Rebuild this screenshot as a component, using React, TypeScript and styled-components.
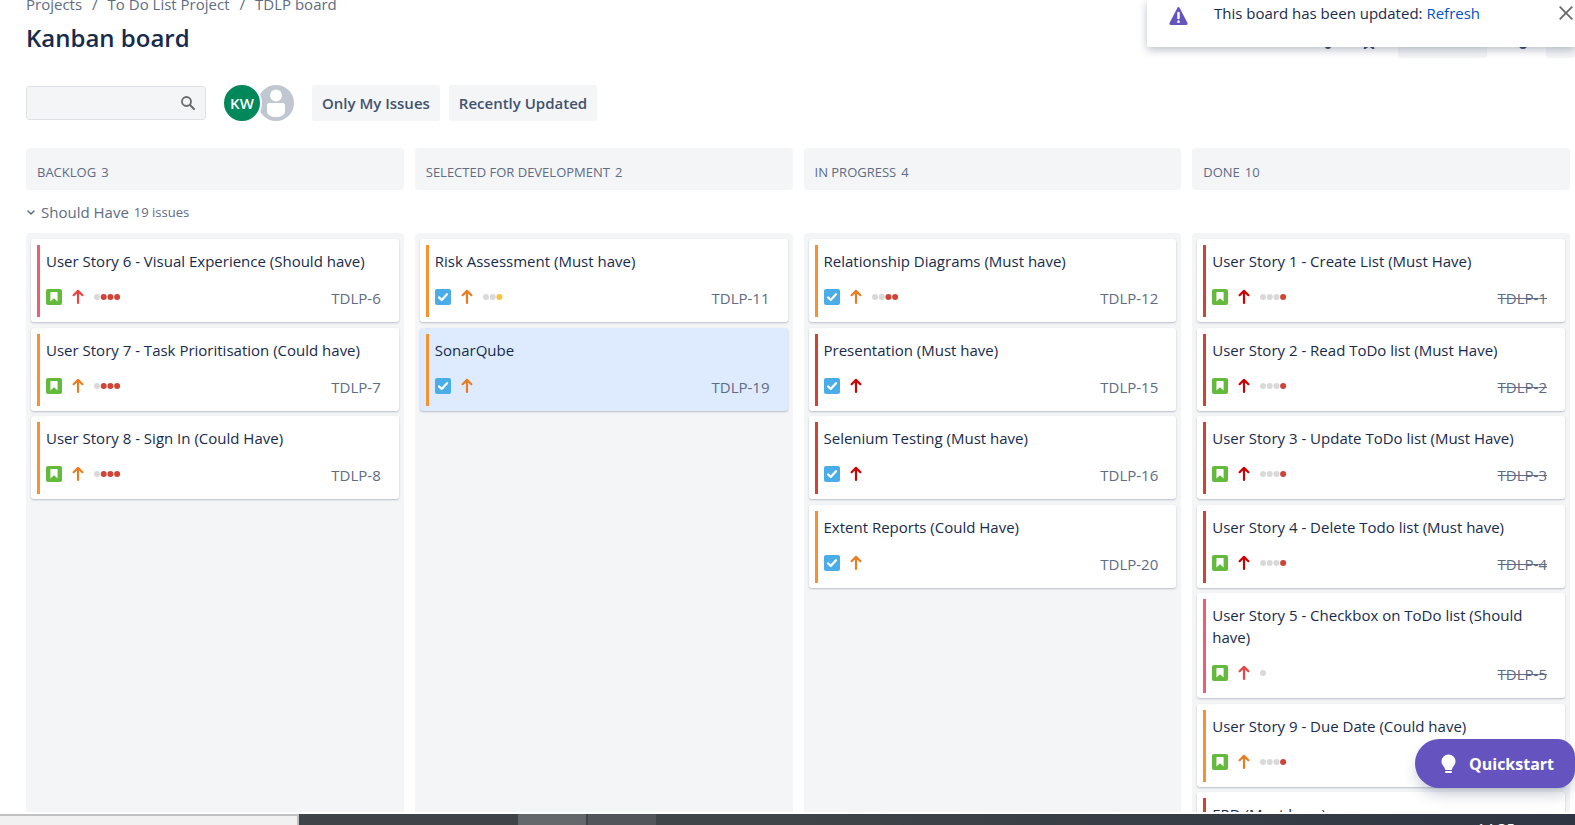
import React from 'react';
import styled, { createGlobalStyle } from 'styled-components';

const GlobalStyle = createGlobalStyle`
  *, *::before, *::after { box-sizing: border-box; }
  html, body, #root { height: 100%; margin: 0; }
  body {
    overflow: hidden;
    background: #fff;
    color: #172b4d;
    font-family: 'Open Sans', 'Noto Sans', sans-serif;
    font-size: 15px;
    line-height: 22px;
  }
  button, input { font: inherit; color: inherit; }
  button { border: 0; background: none; padding: 0; cursor: pointer; }
  a { color: inherit; text-decoration: none; }
  h1, h2, p, ul { margin: 0; padding: 0; font-weight: 400; }
  ul { list-style: none; }
  svg { display: block; flex: none; }
`;

const Screen = styled.div`
  display: flex;
  flex-direction: column;
  height: 100vh;
  overflow: hidden;
`;

const Page = styled.main`
  display: flex;
  flex-direction: column;
  flex: 1;
  min-height: 0;
  padding: 0 5px 2px 26px;
`;

const Breadcrumbs = styled.nav`
  display: flex;
  gap: 10px;
  height: 15px;
  align-items: flex-end;
  color: #5e6c84;
  white-space: nowrap;
`;

const TitleRow = styled.header`
  display: flex;
  justify-content: space-between;
  height: 43px;
`;

const PageTitle = styled.h1`
  font-size: 24px;
  font-weight: 600;
  line-height: 46px;
`;

const HeaderActions = styled.div`
  display: flex;
  align-items: flex-end;
  gap: 16px;
  margin-right: -5px;
`;

const HeaderIcon = styled.button<{ $align?: string }>`
  display: grid;
  justify-items: ${(p) => p.$align || 'center'};
  align-content: start;
  width: 27px;
  height: 23px;
  color: #42526e;
`;

const HeaderButton = styled.button<{ $width: number }>`
  width: ${(p) => p.$width}px;
  height: 36px;
  border-radius: 3px;
  background: #f4f5f7;
`;

const Toolbar = styled.div`
  display: flex;
  align-items: center;
  height: 36px;
  margin: 27px 0;
`;

const SearchBox = styled.label`
  display: flex;
  align-items: center;
  width: 180px;
  height: 34px;
  padding: 0 9px;
  border: 1px solid #dfe1e6;
  border-radius: 3px;
  background: #f4f5f7;
  color: #6b6b6b;
`;

const SearchInput = styled.input`
  flex: 1;
  min-width: 0;
  border: 0;
  outline: 0;
  background: transparent;
`;

const Avatars = styled.div`
  display: flex;
  margin: 0 16px;
`;

const Avatar = styled.button<{ $color: string }>`
  display: grid;
  place-items: center;
  width: 40px;
  height: 40px;
  border: 2px solid #fff;
  border-radius: 50%;
  background: ${(p) => p.$color};
  color: #fff;
  font-weight: 600;
  overflow: hidden;

  &:first-child { z-index: 1; }
  & + & { margin-left: -6px; }
`;

const FilterButton = styled.button`
  height: 36px;
  padding: 0 10px;
  border-radius: 3px;
  background: #f4f5f7;
  color: #42526e;
  font-weight: 600;
  white-space: nowrap;

  & + & { margin-left: 9px; }
`;

const Columns = styled.div`
  display: grid;
  grid-template-columns: repeat(4, minmax(0, 1fr));
  gap: 11px;
`;

const BoardColumns = styled(Columns)`
  flex: 1;
  min-height: 0;
  grid-template-rows: minmax(0, 1fr);
`;

const ColumnHeader = styled.h2`
  display: flex;
  gap: 5px;
  height: 42px;
  padding: 13px 11px 0;
  border-radius: 4px;
  background: #f4f5f7;
  color: #5e6c84;
  font-size: 13px;
`;

const Swimlane = styled.button`
  display: flex;
  align-items: center;
  gap: 5px;
  height: 43px;
  color: #5e6c84;
`;

const LaneCount = styled.span`
  font-size: 13px;
`;

const Column = styled.ul`
  min-height: 0;
  padding: 6px 5px;
  border-radius: 4px 4px 0 0;
  background: #f4f5f7;
  overflow: hidden;
`;

const CardBox = styled.li<{ $selected?: boolean }>`
  display: flex;
  padding: 6px 18px 5px 6px;
  border-radius: 3px;
  background: ${(p) => (p.$selected ? '#deebff' : '#fff')};
  box-shadow: 0 1px 2px rgba(9, 30, 66, 0.25);

  &:nth-child(odd) { margin-bottom: 6px; }
  &:nth-child(even) { margin-bottom: 5px; }
`;

const Grabber = styled.span<{ $color: string }>`
  flex: none;
  width: 3px;
  background: ${(p) => p.$color};
`;

const CardBody = styled.div`
  flex: 1;
  min-width: 0;
  padding: 5px 0 9px 6px;
`;

const CardFooter = styled.div`
  display: flex;
  align-items: center;
  height: 22px;
  margin-top: 14px;
`;

const CardIcons = styled.span`
  display: flex;
  align-items: center;
  gap: 8px;
`;

const IssueKey = styled.a<{ $done?: boolean }>`
  margin-left: auto;
  padding-top: 2px;
  color: #5e6c84;
  text-decoration: ${(p) => (p.$done ? 'line-through' : 'none')};
`;

const Notification = styled.aside`
  position: absolute;
  top: 0;
  right: 0;
  display: flex;
  width: 428px;
  height: 47px;
  padding: 2px 0 0 22px;
  border-radius: 0 0 0 3px;
  background: #fff;
  box-shadow: 0 3px 8px rgba(9, 30, 66, 0.28);
  white-space: nowrap;
`;

const NotificationText = styled.p`
  flex: 1;
  margin-left: 26px;
`;

const NotificationLink = styled.a`
  color: #0052cc;
`;

const CloseButton = styled.button`
  display: grid;
  place-items: center;
  width: 18px;
  height: 22px;
  color: #666;
`;

const Quickstart = styled.button`
  position: absolute;
  right: 0;
  bottom: 37px;
  display: flex;
  align-items: center;
  gap: 13px;
  width: 160px;
  height: 49px;
  padding-left: 26px;
  border-radius: 25px 18px 18px 25px;
  background: #6554c0;
  color: #fff;
  font-size: 16px;
  font-weight: 700;
  box-shadow: 0 8px 16px -4px rgba(9, 30, 66, 0.3);
`;

const Taskbar = styled.footer`
  display: flex;
  flex: none;
  height: 11px;
  background: linear-gradient(90deg, #404447 0%, #3f4448 50%, #2f3542 100%);
  overflow: hidden;
`;

const TaskbarSearch = styled.div`
  width: 299px;
  border: solid #c0c0c0;
  border-width: 2px 2px 0 0;
  background: #f1f1f1;
  margin-right: 219px;
`;

const TaskbarItem = styled.div<{ $color: string }>`
  width: 68px;
  margin-right: 2px;
  background: ${(p) => p.$color};
`;

const Clock = styled.time`
  margin: 3px 60px 0 auto;
  color: #fff;
`;

type IssueType = 'story' | 'task';
type Priority = 'highest' | 'high' | 'medium';

interface Issue {
  id: number;
  title: string;
  type: IssueType;
  priority: Priority;
  bar: string;
  dots?: string;
  selected?: boolean;
}

const PINK = '#f15c75';
const ORANGE = '#f79232';
const RED = '#d04437';

const arrowColors: Record<Priority, string> = {
  highest: '#ce0000',
  high: '#ea4444',
  medium: '#ea7d24',
};

const dotColors: Record<string, string> = { g: '#d9d9d9', r: '#d04437', y: '#f6c342' };

const columns: { name: string; count: number; done?: boolean; issues: Issue[] }[] = [
  {
    name: 'BACKLOG',
    count: 3,
    issues: [
      { id: 6, title: 'User Story 6 - Visual Experience (Should have)', type: 'story', priority: 'high', bar: PINK, dots: 'grrr' },
      { id: 7, title: 'User Story 7 - Task Prioritisation (Could have)', type: 'story', priority: 'medium', bar: ORANGE, dots: 'grrr' },
      { id: 8, title: 'User Story 8 - Sign In (Could Have)', type: 'story', priority: 'medium', bar: ORANGE, dots: 'grrr' },
    ],
  },
  {
    name: 'SELECTED FOR DEVELOPMENT',
    count: 2,
    issues: [
      { id: 11, title: 'Risk Assessment (Must have)', type: 'task', priority: 'medium', bar: ORANGE, dots: 'ggy' },
      { id: 19, title: 'SonarQube', type: 'task', priority: 'medium', bar: ORANGE, selected: true },
    ],
  },
  {
    name: 'IN PROGRESS',
    count: 4,
    issues: [
      { id: 12, title: 'Relationship Diagrams (Must have)', type: 'task', priority: 'medium', bar: ORANGE, dots: 'ggrr' },
      { id: 15, title: 'Presentation (Must have)', type: 'task', priority: 'highest', bar: RED },
      { id: 16, title: 'Selenium Testing (Must have)', type: 'task', priority: 'highest', bar: RED },
      { id: 20, title: 'Extent Reports (Could Have)', type: 'task', priority: 'medium', bar: ORANGE },
    ],
  },
  {
    name: 'DONE',
    count: 10,
    done: true,
    issues: [
      { id: 1, title: 'User Story 1 - Create List (Must Have)', type: 'story', priority: 'highest', bar: RED, dots: 'gggr' },
      { id: 2, title: 'User Story 2 - Read ToDo list (Must Have)', type: 'story', priority: 'highest', bar: RED, dots: 'gggr' },
      { id: 3, title: 'User Story 3 - Update ToDo list (Must Have)', type: 'story', priority: 'highest', bar: RED, dots: 'gggr' },
      { id: 4, title: 'User Story 4 - Delete Todo list (Must have)', type: 'story', priority: 'highest', bar: RED, dots: 'gggr' },
      { id: 5, title: 'User Story 5 - Checkbox on ToDo list (Should have)', type: 'story', priority: 'high', bar: PINK, dots: 'g' },
      { id: 9, title: 'User Story 9 - Due Date (Could have)', type: 'story', priority: 'medium', bar: ORANGE, dots: 'gggr' },
      { id: 10, title: 'ERD (Must have)', type: 'task', priority: 'highest', bar: RED },
    ],
  },
];

const TypeIcon = ({ type }: { type: IssueType }) => (
  <svg width="16" height="16" viewBox="0 0 16 16" aria-hidden="true">
    <rect width="16" height="16" rx="2" fill={type === 'story' ? '#63ba3c' : '#4bade8'} />
    {type === 'story' ? (
      <path d="M5 3h6a.6.6 0 0 1 .6.6V12.6L8 9.2l-3.6 3.4V3.6A.6.6 0 0 1 5 3z" fill="#fff" />
    ) : (
      <path d="M4 8.4l2.7 2.6L12 5.2" fill="none" stroke="#fff" strokeWidth="2.2" strokeLinecap="round" strokeLinejoin="round" />
    )}
  </svg>
);

const PriorityIcon = ({ priority }: { priority: Priority }) => (
  <svg width="16" height="16" viewBox="0 0 16 16" aria-hidden="true">
    <path
      d="M8 14V2.6M3.6 6.2L8 1.9l4.4 4.3"
      fill="none"
      stroke={arrowColors[priority]}
      strokeWidth="2.2"
      strokeLinecap="round"
      strokeLinejoin="round"
    />
  </svg>
);

const DaysInColumn = ({ dots }: { dots: string }) => (
  <svg width="28" height="6" viewBox="0 0 28 6" aria-hidden="true">
    {dots.split('').map((dot, i) => (
      <circle key={i} cx={3 + i * 6.7} cy="3" r="3" fill={dotColors[dot]} />
    ))}
  </svg>
);

const Card = ({ issue, done }: { issue: Issue; done?: boolean }) => (
  <CardBox $selected={issue.selected}>
    <Grabber $color={issue.bar} />
    <CardBody>
      <p>{issue.title}</p>
      <CardFooter>
        <CardIcons>
          <TypeIcon type={issue.type} />
          <PriorityIcon priority={issue.priority} />
          {issue.dots && <DaysInColumn dots={issue.dots} />}
        </CardIcons>
        <IssueKey href={`#TDLP-${issue.id}`} $done={done}>
          TDLP-{issue.id}
        </IssueKey>
      </CardFooter>
    </CardBody>
  </CardBox>
);

export default function App() {
  return (
    <Screen>
      <GlobalStyle />
      <Page>
        <Breadcrumbs aria-label="Breadcrumb">
          <a href="#projects">Projects</a>
          <span>/</span>
          <a href="#project">To Do List Project</a>
          <span>/</span>
          <a href="#board">TDLP board</a>
        </Breadcrumbs>
        <TitleRow>
          <PageTitle>Kanban board</PageTitle>
          <HeaderActions>
            <HeaderIcon aria-label="Give feedback">
              <svg width="14" height="14" viewBox="0 0 14 14">
                <circle cx="9" cy="11" r="3" fill="currentColor" />
              </svg>
            </HeaderIcon>
            <HeaderIcon aria-label="Star board">
              <svg width="14" height="14" viewBox="0 0 14 14" fill="none" stroke="currentColor" strokeWidth="2">
                <path d="M7 1l1.8 4 4.2.4-3.2 2.9 1.400 5L7 10.300l-4.200 3 1.400-5L1 5.400 5.200 5z" />
              </svg>
            </HeaderIcon>
            <HeaderButton $width={89} aria-label="Release" />
            <HeaderIcon $align="end" aria-label="Share">
              <svg width="14" height="14" viewBox="0 0 14 14">
                <circle cx="7" cy="10" r="4" fill="currentColor" />
              </svg>
            </HeaderIcon>
            <HeaderButton $width={29} aria-label="More actions" />
          </HeaderActions>
        </TitleRow>

        <Toolbar>
          <SearchBox>
            <SearchInput type="text" aria-label="Search issues" />
            <svg width="16" height="16" viewBox="0 0 16 16" fill="none" stroke="currentColor" strokeLinecap="round">
              <circle cx="6.5" cy="6.5" r="4.5" strokeWidth="1.8" />
              <path d="M10 10l4 4" strokeWidth="2.2" />
            </svg>
          </SearchBox>
          <Avatars>
            <Avatar $color="#00875a">KW</Avatar>
            <Avatar $color="#c1c7d0" aria-label="Unassigned">
              <svg width="36" height="36" viewBox="0 0 36 36" fill="#fff">
                <circle cx="18" cy="10.5" r="6" />
                <path d="M11.5 18h13a2.5 2.5 0 0 1 2.5 2.5V26c0 4-4 6-9 6s-9-2-9-6v-5.5a2.5 2.5 0 0 1 2.5-2.5z" />
              </svg>
            </Avatar>
          </Avatars>
          <FilterButton>Only My Issues</FilterButton>
          <FilterButton>Recently Updated</FilterButton>
        </Toolbar>

        <Columns>
          {columns.map((c) => (
            <ColumnHeader key={c.name}>
              <span>{c.name}</span>
              <span>{c.count}</span>
            </ColumnHeader>
          ))}
        </Columns>
        <Swimlane aria-expanded="true">
          <svg width="10" height="10" viewBox="0 0 10 10" fill="none" stroke="currentColor" strokeWidth="1.5">
            <path d="M2 4l3 3 3-3" strokeLinecap="round" strokeLinejoin="round" />
          </svg>
          <span>Should Have</span>
          <LaneCount>19 issues</LaneCount>
        </Swimlane>
        <BoardColumns>
          {columns.map((c) => (
            <Column key={c.name} aria-label={c.name}>
              {c.issues.map((issue) => (
                <Card key={issue.id} issue={issue} done={c.done} />
              ))}
            </Column>
          ))}
        </BoardColumns>
      </Page>

      <Taskbar>
        <TaskbarSearch />
        <TaskbarItem $color="#65686b" />
        <TaskbarItem $color="#525559" />
        <Clock>14:35</Clock>
      </Taskbar>

      <Notification role="status">
        <svg width="19" height="23" viewBox="0 0 19 23">
          <path d="M8.3 5.9a1.3 1.3 0 0 1 2.400 0l7.800 15.200c.4.9-.2 1.900-1.100 1.900H1.600c-.9 0-1.500-1-1.100-1.900z" fill="#6554c0" />
          <path d="M9.5 11v5M9.5 19.500v.4" stroke="#fff" strokeWidth="2.400" strokeLinecap="round" />
        </svg>
        <NotificationText>
          This board has been updated: <NotificationLink href="#refresh">Refresh</NotificationLink>
        </NotificationText>
        <CloseButton aria-label="Close">
          <svg width="14" height="14" viewBox="0 0 14 14" fill="none" stroke="currentColor" strokeWidth="1.7">
            <path d="M.7.7l12.600 12.600M13.300.7L.7 13.300" />
          </svg>
        </CloseButton>
      </Notification>

      <Quickstart>
        <svg width="15" height="20" viewBox="0 0 15 20" fill="#fff">
          <path d="M7.5.5a7 7 0 0 0-7 7c0 2.600 1.500 4 2.600 5.500.6.9.9 2 1.200 3h6.400c.3-1 .6-2.100 1.200-3 1.100-1.500 2.600-2.900 2.600-5.500a7 7 0 0 0-7-7z" />
          <rect x="4" y="17" width="7" height="2" rx="1" />
        </svg>
        Quickstart
      </Quickstart>
    </Screen>
  );
}
